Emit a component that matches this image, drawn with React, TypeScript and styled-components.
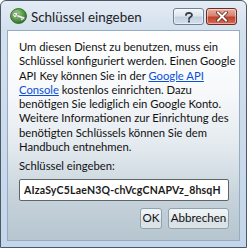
import React from 'react';
import styled, { createGlobalStyle } from 'styled-components';

const GlobalStyle = createGlobalStyle`
    html, body {
        margin: 0;
        padding: 0;
        background: #ffffff;
    }
    body {
        font-family: Lato, "Noto Sans", sans-serif;
    }
`;

const Window = styled.div`
    box-sizing: border-box;
    width: 247px;
    height: 248px;
    display: flex;
    flex-direction: column;
    border: 1px solid #4b5866;
    border-radius: 6px 6px 0 0;
    background: linear-gradient(to bottom, #e4ecf5 0px, #d3e0ee 28px, #c4d6ea 100%);
    overflow: hidden;
`;

const TitleBar = styled.div`
    height: 29px;
    flex: 0 0 29px;
    display: flex;
    align-items: center;
    padding: 0 9px 0 9px;
`;

const Title = styled.span`
    margin-left: 4px;
    font-size: 13.4px;
    color: #1c1c1c;
    margin-top: 2px;
`;

const CaptionButtons = styled.div`
    margin-left: auto;
    display: flex;
    gap: 2px;
    margin-top: 2px;
`;

const CaptionButton = styled.div<{ $close?: boolean }>`
    box-sizing: border-box;
    width: 31px;
    height: 17px;
    display: flex;
    align-items: center;
    justify-content: center;
    border-radius: 3px;
    border: 1px solid ${(p) => (p.$close ? '#6b2a22' : '#6f8196')};
    background: ${(p) =>
        p.$close
            ? 'linear-gradient(to bottom, #eab0a4 0%, #d6826f 45%, #c0432f 55%, #d56a52 100%)'
            : 'linear-gradient(to bottom, #f3f6fa 0%, #dde6f0 45%, #c3d1e0 55%, #d5e0ec 100%)'};
    box-shadow: inset 0 0 0 1px rgba(255, 255, 255, 0.45);
`;

const Client = styled.div`
    flex: 1;
    margin: 0 6px 6px 6px;
    border: 1px solid #97abc2;
    background: linear-gradient(to bottom, #ffffff 0%, #f6f8fa 30%, #e3eaef 55%, #c8d4dc 78%, #b6c5cf 100%);
    padding: 9px 10px 0 11px;
    display: flex;
    flex-direction: column;
    font-size: 11.25px;
    line-height: 14.3px;
    color: #101010;
`;

const Message = styled.p`
    margin: 0;
    white-space: nowrap;
`;

const Link = styled.a`
    color: #0a4ed6;
    text-decoration: underline;
`;

const FieldLabel = styled.div`
    margin-top: 5px;
`;

const KeyInput = styled.div`
    box-sizing: border-box;
    margin-top: 5px;
    height: 22px;
    display: flex;
    align-items: center;
    padding: 0 4px;
    background: #ffffff;
    border: 1px solid #5f6468;
    border-radius: 2px;
    overflow: hidden;
    white-space: nowrap;
    font-size: 10.5px;
    font-weight: 700;
    letter-spacing: 0.2px;
    color: #1a1a1a;
`;

const ButtonRow = styled.div`
    margin-top: 7px;
    display: flex;
    justify-content: flex-end;
    gap: 6px;
`;

const DialogButton = styled.div<{ $width: number }>`
    box-sizing: border-box;
    width: ${(p) => p.$width}px;
    height: 21px;
    display: flex;
    align-items: center;
    justify-content: center;
    border: 1px solid #8ea3ad;
    border-radius: 3px;
    background: linear-gradient(to bottom, #f1f4f6 0%, #e6ecef 50%, #d8e0e5 51%, #dde4e8 100%);
    font-size: 11.6px;
    color: #111;
`;

const KeyIcon = () => (
    <svg width="17" height="16" viewBox="0 0 17 16">
        <defs>
            <radialGradient id="g" cx="40%" cy="35%" r="70%">
                <stop offset="0%" stopColor="#9fd58a" />
                <stop offset="60%" stopColor="#4f9a3e" />
                <stop offset="100%" stopColor="#2f6d27" />
            </radialGradient>
        </defs>
        <ellipse cx="8.5" cy="8" rx="8" ry="7.5" fill="url(#g)" stroke="#2d5e26" strokeWidth="0.8" />
        <g transform="rotate(20 8.5 8)">
            <circle cx="5.2" cy="8" r="2.6" fill="#f4f4f4" stroke="#7a7a7a" strokeWidth="0.6" />
            <rect x="7" y="6.9" width="8" height="2.4" fill="#f4f4f4" stroke="#7a7a7a" strokeWidth="0.6" />
            <rect x="12" y="9" width="1.6" height="2" fill="#e8e8e8" />
            <circle cx="4.6" cy="8" r="0.8" fill="#6a9a5a" />
        </g>
    </svg>
);

const HelpGlyph = () => (
    <svg width="10" height="12" viewBox="0 0 10 12">
        <path
            d="M2 4 C2 1.5 8 1.2 8 4 C8 6 5 6 5 8"
            fill="none"
            stroke="#3a3f47"
            strokeWidth="1.8"
            strokeLinecap="round"
        />
        <rect x="4" y="9.4" width="2" height="2" fill="#3a3f47" />
    </svg>
);

const CloseGlyph = () => (
    <svg width="12" height="11" viewBox="0 0 12 11">
        <path
            d="M2 1.5 L10 9.5 M10 1.5 L2 9.5"
            stroke="#5b1a12"
            strokeWidth="3.4"
            strokeLinecap="square"
        />
        <path
            d="M2 1.5 L10 9.5 M10 1.5 L2 9.5"
            stroke="#ffffff"
            strokeWidth="2"
            strokeLinecap="square"
        />
    </svg>
);

export default function App() {
    return (
        <>
            <GlobalStyle />
            <Window>
                <TitleBar>
                    <KeyIcon />
                    <Title>Schlüssel eingeben</Title>
                    <CaptionButtons>
                        <CaptionButton>
                            <HelpGlyph />
                        </CaptionButton>
                        <CaptionButton $close>
                            <CloseGlyph />
                        </CaptionButton>
                    </CaptionButtons>
                </TitleBar>
                <Client>
                    <Message>
                        Um diesen Dienst zu benutzen, muss ein
                        <br />
                        Schlüssel konfiguriert werden. Einen Google
                        <br />
                        API Key können Sie in der <Link href="#">Google API</Link>
                        <br />
                        <Link href="#">Console</Link> kostenlos einrichten. Dazu
                        <br />
                        benötigen Sie lediglich ein Google Konto.
                        <br />
                        Weitere Informationen zur Einrichtung des
                        <br />
                        benötigten Schlüssels können Sie dem
                        <br />
                        Handbuch entnehmen.
                    </Message>
                    <FieldLabel>Schlüssel eingeben:</FieldLabel>
                    <KeyInput>AIzaSyC5LaeN3Q-chVcgCNAPVz_8hsqH</KeyInput>
                    <ButtonRow>
                        <DialogButton $width={22}>OK</DialogButton>
                        <DialogButton $width={61}>Abbrechen</DialogButton>
                    </ButtonRow>
                </Client>
            </Window>
        </>
    );
}
